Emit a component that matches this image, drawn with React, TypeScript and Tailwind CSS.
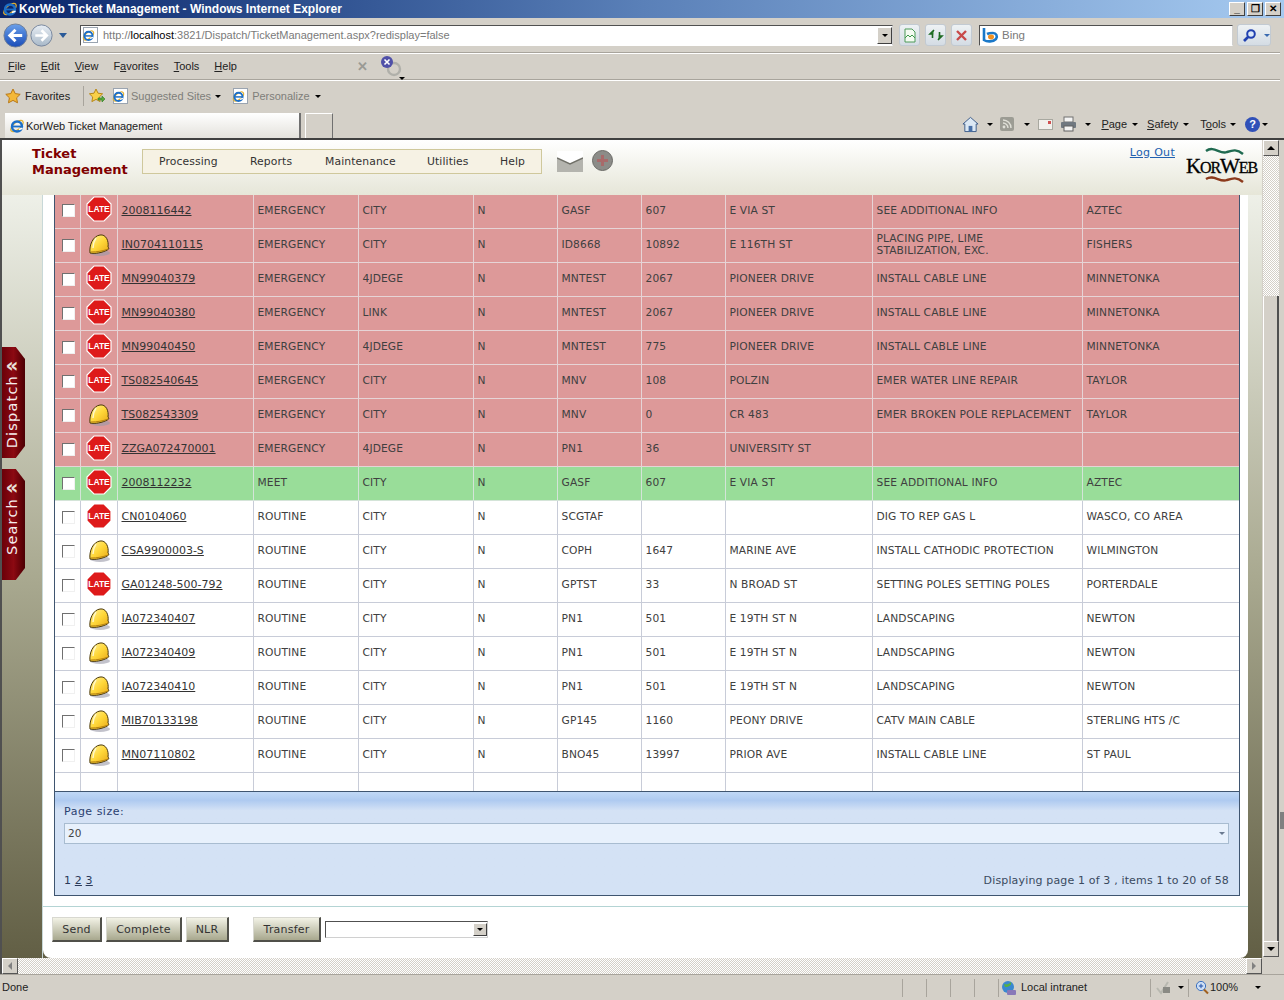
import React from "react"

type Row = {
  id: string
  icon: "late" | "hat"
  kind: string
  area: string
  code: string
  num: string
  street: string
  work: string[]
  city: string
  tone: "red" | "green" | "white"
}

const rows: Row[] = [
  { id: "2008116442", icon: "late", kind: "EMERGENCY", area: "CITY", code: "GASF", num: "607", street: "E VIA ST", work: ["SEE ADDITIONAL INFO"], city: "AZTEC", tone: "red" },
  { id: "IN0704110115", icon: "hat", kind: "EMERGENCY", area: "CITY", code: "ID8668", num: "10892", street: "E 116TH ST", work: ["PLACING PIPE, LIME", "STABILIZATION, EXC."], city: "FISHERS", tone: "red" },
  { id: "MN99040379", icon: "late", kind: "EMERGENCY", area: "4JDEGE", code: "MNTEST", num: "2067", street: "PIONEER DRIVE", work: ["INSTALL CABLE LINE"], city: "MINNETONKA", tone: "red" },
  { id: "MN99040380", icon: "late", kind: "EMERGENCY", area: "LINK", code: "MNTEST", num: "2067", street: "PIONEER DRIVE", work: ["INSTALL CABLE LINE"], city: "MINNETONKA", tone: "red" },
  { id: "MN99040450", icon: "late", kind: "EMERGENCY", area: "4JDEGE", code: "MNTEST", num: "775", street: "PIONEER DRIVE", work: ["INSTALL CABLE LINE"], city: "MINNETONKA", tone: "red" },
  { id: "TS082540645", icon: "late", kind: "EMERGENCY", area: "CITY", code: "MNV", num: "108", street: "POLZIN", work: ["EMER WATER LINE REPAIR"], city: "TAYLOR", tone: "red" },
  { id: "TS082543309", icon: "hat", kind: "EMERGENCY", area: "CITY", code: "MNV", num: "0", street: "CR 483", work: ["EMER BROKEN POLE REPLACEMENT"], city: "TAYLOR", tone: "red" },
  { id: "ZZGA072470001", icon: "late", kind: "EMERGENCY", area: "4JDEGE", code: "PN1", num: "36", street: "UNIVERSITY ST", work: [""], city: "", tone: "red" },
  { id: "2008112232", icon: "late", kind: "MEET", area: "CITY", code: "GASF", num: "607", street: "E VIA ST", work: ["SEE ADDITIONAL INFO"], city: "AZTEC", tone: "green" },
  { id: "CN0104060", icon: "late", kind: "ROUTINE", area: "CITY", code: "SCGTAF", num: "", street: "", work: ["DIG TO REP GAS L"], city: "WASCO, CO AREA", tone: "white" },
  { id: "CSA9900003-S", icon: "hat", kind: "ROUTINE", area: "CITY", code: "COPH", num: "1647", street: "MARINE AVE", work: ["INSTALL CATHODIC PROTECTION"], city: "WILMINGTON", tone: "white" },
  { id: "GA01248-500-792", icon: "late", kind: "ROUTINE", area: "CITY", code: "GPTST", num: "33", street: "N BROAD ST", work: ["SETTING POLES SETTING POLES"], city: "PORTERDALE", tone: "white" },
  { id: "IA072340407", icon: "hat", kind: "ROUTINE", area: "CITY", code: "PN1", num: "501", street: "E 19TH ST N", work: ["LANDSCAPING"], city: "NEWTON", tone: "white" },
  { id: "IA072340409", icon: "hat", kind: "ROUTINE", area: "CITY", code: "PN1", num: "501", street: "E 19TH ST N", work: ["LANDSCAPING"], city: "NEWTON", tone: "white" },
  { id: "IA072340410", icon: "hat", kind: "ROUTINE", area: "CITY", code: "PN1", num: "501", street: "E 19TH ST N", work: ["LANDSCAPING"], city: "NEWTON", tone: "white" },
  { id: "MIB70133198", icon: "hat", kind: "ROUTINE", area: "CITY", code: "GP145", num: "1160", street: "PEONY DRIVE", work: ["CATV MAIN CABLE"], city: "STERLING HTS /C", tone: "white" },
  { id: "MN07110802", icon: "hat", kind: "ROUTINE", area: "CITY", code: "BNO45", num: "13997", street: "PRIOR AVE", work: ["INSTALL CABLE LINE"], city: "ST PAUL", tone: "white" },
]

const IeLogo = ({ size = 16 }: { size?: number }) => (
  <svg width={size} height={size} viewBox="0 0 16 16" className="shrink-0">
    <ellipse cx="8" cy="8" rx="7.5" ry="3.6" transform="rotate(-40 8 8)" fill="none" stroke="#e0b030" strokeWidth="1.3" />
    <circle cx="8" cy="8.5" r="5" fill="none" stroke="#1c6fc8" strokeWidth="2.4" />
    <path d="M3.5 8.5h9" stroke="#1c6fc8" strokeWidth="1.8" />
    <path d="M10 11.5l3.5-1.2" stroke="#ffffff" strokeWidth="1.6" />
  </svg>
)

const PageIe = () => (
  <span className="relative block h-[16px] w-[15px] shrink-0 border border-[#9aa4b0] bg-white">
    <span className="absolute left-[-2px] top-[1px]">
      <IeLogo size={13} />
    </span>
  </span>
)

const Caret = ({ className = "" }: { className?: string }) => (
  <span className={`inline-block h-0 w-0 border-x-[3px] border-t-[3px] border-x-transparent border-t-black ${className}`} />
)

const NavButton = ({ size, from, to, dir }: { size: number; from: string; to: string; dir: string }) => (
  <svg width={size} height={size} viewBox="0 0 26 26" className="shrink-0">
    <defs>
      <linearGradient id={`nav${dir}`} x1="0" y1="0" x2="0" y2="1">
        <stop offset="0" stopColor={from} />
        <stop offset="1" stopColor={to} />
      </linearGradient>
    </defs>
    <circle cx="13" cy="13" r="12" fill={`url(#nav${dir})`} stroke="#6f7f98" />
    <path d={dir === "back" ? "M20 13H8m5-6l-6 6 6 6" : "M6 13h12m-5-6l6 6-6 6"} fill="none" stroke="#ffffff" strokeWidth="3" />
  </svg>
)

const ToolButton = ({ children }: { children: React.ReactNode }) => (
  <span className="flex h-[22px] w-[21px] items-center justify-center rounded-[3px] border border-[#c2cad2] bg-gradient-to-b from-[#eef2f4] to-[#d4dce4]">
    {children}
  </span>
)

const ArrowButton = ({ dir }: { dir: "up" | "down" | "left" | "right" }) => {
  const tri = {
    up: "border-x-[4px] border-b-[4px] border-x-transparent border-b-black",
    down: "border-x-[4px] border-t-[4px] border-x-transparent border-t-black",
    left: "border-y-[4px] border-r-[4px] border-y-transparent border-r-[#808080]",
    right: "border-y-[4px] border-l-[4px] border-y-transparent border-l-[#808080]",
  }[dir]
  return (
    <span className="flex h-[16px] w-[16px] shrink-0 items-center justify-center border border-t-white border-l-white border-r-[#555555] border-b-[#555555] bg-[#d4d0c8]">
      <span className={`h-0 w-0 ${tri}`} />
    </span>
  )
}

const LateIcon = () => (
  <svg width="26" height="26" viewBox="0 0 26 26" className="mx-auto mb-[3px] block">
    <polygon points="8,1 18,1 25,8 25,18 18,25 8,25 1,18 1,8" fill="#de1a1a" stroke="#ffffff" strokeWidth="1.2" />
    <text x="13" y="15.5" textAnchor="middle" fontSize="8.5" fontWeight="700" fill="#ffffff" fontFamily="Liberation Sans, sans-serif">LATE</text>
  </svg>
)

const HatIcon = () => (
  <svg width="24" height="24" viewBox="0 0 24 24" className="mx-auto mb-[1px] block">
    <defs>
      <linearGradient id="hat" x1="0" y1="0" x2="1" y2="1">
        <stop offset="0" stopColor="#fff2a0" />
        <stop offset="0.5" stopColor="#ffd83a" />
        <stop offset="1" stopColor="#e8a818" />
      </linearGradient>
    </defs>
    <ellipse cx="13" cy="20" rx="10" ry="3" fill="#9a9aa8" opacity="0.6" />
    <path d="M3 20C2 12 6 3 13 2c6-1 9 6 8 12 1 1 1 2 0 2.6C15 20 8 21 3 20Z" fill="url(#hat)" stroke="#4a3808" strokeWidth="1" />
    <path d="M9 5c-2 3-3 6-3 10" fill="none" stroke="#fff8c8" strokeWidth="1.4" />
    <path d="M4 19c6 0 12-1 17-3" fill="none" stroke="#b88410" strokeWidth="1" />
  </svg>
)

const SideTab = ({ label, bottom }: { label: string; bottom: string }) => (
  <div className={`flex h-[111px] w-[23px] flex-col items-center bg-gradient-to-r from-[#6a0008] via-[#8c0a12] to-[#4c0004] pr-[3px] pt-[8px] ${bottom} [clip-path:polygon(0_0,60%_0,100%_12px,100%_calc(100%-12px),60%_100%,0_100%)]`}>
    <span className="text-[20px] font-bold leading-[20px] text-[#e8e0d8]">«</span>
    <span className="mt-auto rotate-180 text-[14.5px] leading-[20px] tracking-[1.2px] text-[#f4eeee] [writing-mode:vertical-rl]">{label}</span>
  </div>
)

const FormButton = ({ label, width }: { label: string; width: string }) => (
  <button className={`h-[25px] ${width} border border-t-[#d8d8d0] border-l-[#d8d8d0] border-r-2 border-b-2 border-r-[#50504a] border-b-[#50504a] bg-gradient-to-b from-[#f2f2e6] to-[#a8a88e] pt-[3px] text-[11px] tracking-[0.2px] text-[#333333]`}>
    {label}
  </button>
)

const toneClass = { red: "bg-[#dd9999]", green: "bg-[#99dd99]", white: "bg-white" }
const lineClass = { red: "border-[#e6d4d6]", green: "border-[#d4e4d8]", white: "border-[#c8ccd8]" }
const cell = "border-r pl-[4px] pr-[3px] align-middle text-[10.67px] leading-[12px] tracking-[0.12px] text-[#404040]"

export default function App() {
  return (
    <div className="flex h-[1000px] w-[1284px] flex-col overflow-hidden bg-[#d4d0c8] font-['Liberation_Sans',sans-serif] text-[11px] text-[#222222]">
      {/* Title bar */}
      <div className="flex h-[18px] items-center bg-gradient-to-r from-[#0a246a] via-[#5a80b8] to-[#a6caf0] pl-[2px] pr-[3px]">
        <IeLogo size={16} />
        <span className="ml-[1px] text-[12px] font-bold leading-[18px] text-white">KorWeb Ticket Management - Windows Internet Explorer</span>
        <div className="ml-auto flex gap-[2px]">
          {["_", "❐", "✕"].map((g) => (
            <span key={g} className="flex h-[14px] w-[16px] items-center justify-center border border-t-white border-l-white border-r-[#404040] border-b-[#404040] bg-[#d4d0c8] text-[10px] font-bold leading-none text-black">
              {g}
            </span>
          ))}
        </div>
      </div>

      {/* Address row */}
      <div className="flex h-[34px] items-center pl-[3px]">
        <NavButton size={25} from="#6aa0ea" to="#1a4cb8" dir="back" />
        <span className="ml-[2px]"><NavButton size={23} from="#e8eef4" to="#a8b8c8" dir="fwd" /></span>
        <span className="ml-[6px] h-0 w-0 border-x-[4px] border-t-[5px] border-x-transparent border-t-[#2a5a98]" />
        <div className="ml-[13px] flex h-[21px] w-[813px] items-center border border-t-[#505050] border-l-[#505050] border-r-[#d0d0d0] border-b-white bg-white pl-[2px]">
          <PageIe />
          <span className="ml-[5px] pt-px text-[11px] text-[#7a7a7a]">http://<span className="text-black">localhost</span>:3821/Dispatch/TicketManagement.aspx?redisplay=false</span>
          <span className="ml-auto flex h-[17px] w-[15px] items-center justify-center border border-t-white border-l-white border-r-[#404040] border-b-[#404040] bg-[#d4d0c8]"><Caret /></span>
        </div>
        <div className="ml-[6px] flex gap-[5px]">
          <ToolButton>
            <svg width="14" height="15" viewBox="0 0 14 15"><path d="M2 1h7l3 3v10H2Z" fill="#f4fbf2" stroke="#4c9a58" /><path d="M2 10l3-3 2 2 2-2 3 3" fill="none" stroke="#3f9a4c" /></svg>
          </ToolButton>
          <ToolButton>
            <svg width="16" height="14" viewBox="0 0 16 14"><path d="M6 2L2 6h2.5v4M10 12l4-4h-2.5V4" fill="#2f8a30" stroke="#1d6a22" strokeWidth="1.6" /></svg>
          </ToolButton>
          <ToolButton>
            <svg width="13" height="13" viewBox="0 0 13 13"><path d="M2 2l9 9M11 2l-9 9" stroke="#c84a4a" strokeWidth="2.4" /></svg>
          </ToolButton>
        </div>
        <div className="ml-[7px] flex h-[21px] w-[254px] items-center border border-t-[#505050] border-l-[#505050] border-r-[#d0d0d0] border-b-white bg-white pl-[2px]">
          <svg width="17" height="16" viewBox="0 0 17 16"><path d="M2 1v12c3 2 9 2 12-1 2-3 0-6-3-6-2 0-4 0-6 1" fill="none" stroke="#1a78c8" strokeWidth="2.6" /><ellipse cx="9" cy="10" rx="3" ry="2.4" fill="#f09020" /></svg>
          <span className="ml-[3px] pt-px text-[11.5px] text-[#7a7a7a]">Bing</span>
        </div>
        <div className="ml-[4px] flex h-[22px] w-[34px] items-center rounded-[3px] border border-[#c2cad2] bg-gradient-to-b from-[#eef2f4] to-[#d4dce4] pl-[4px]">
          <svg width="15" height="15" viewBox="0 0 15 15"><circle cx="9" cy="6" r="3.8" fill="#dbe8fa" stroke="#2040b0" strokeWidth="2" /><path d="M6 9l-4 4" stroke="#2040b0" strokeWidth="2.6" /></svg>
          <span className="ml-[7px] h-0 w-0 border-x-[3px] border-t-[3px] border-x-transparent border-t-[#3a6ab0]" />
        </div>
      </div>
      <div className="mr-[4px] h-[2px] border-y border-t-[#a8a49c] border-b-white" />

      {/* Menu row */}
      <div className="flex h-[25px] items-center pl-[8px]">
        <nav className="flex gap-[15px] text-[11px] text-[#222222]">
          <span><u>F</u>ile</span>
          <span><u>E</u>dit</span>
          <span><u>V</u>iew</span>
          <span>F<u>a</u>vorites</span>
          <span><u>T</u>ools</span>
          <span><u>H</u>elp</span>
        </nav>
        <span className="ml-[120px] text-[13px] font-bold text-[#9a9a94]">✕</span>
        <span className="relative ml-[12px] block h-[24px] w-[24px]">
          <svg width="24" height="24" viewBox="0 0 24 24"><circle cx="14" cy="14" r="6" fill="none" stroke="#b0b0aa" strokeWidth="2.4" /><circle cx="7" cy="7" r="6" fill="#5050a8" /><path d="M4.5 4.5l5 5M9.5 4.5l-5 5" stroke="#ffffff" strokeWidth="1.6" /></svg>
          <Caret className="absolute bottom-[-1px] right-[-1px]" />
        </span>
      </div>
      <div className="mr-[4px] h-[2px] border-y border-t-[#a8a49c] border-b-white" />

      {/* Favorites row */}
      <div className="flex h-[30px] items-center pl-[5px] text-[11px]">
        <svg width="16" height="16" viewBox="0 0 16 16"><path d="M8 1l2.2 4.6 5 .7-3.6 3.5.9 5L8 12.4l-4.5 2.4.9-5L.8 6.3l5-.7Z" fill="#f4b838" stroke="#b87818" /></svg>
        <span className="ml-[4px] w-[58px] text-[#222222]">Favorites</span>
        <span className="h-[20px] border-l border-[#a8a49c]" />
        <span className="ml-[4px]">
          <svg width="18" height="16" viewBox="0 0 18 16"><path d="M8 1l2 4.2 4.6.6-3.3 3.2.8 4.6L8 11.4l-4.1 2.2.8-4.6L1.4 5.8 6 5.2Z" fill="#f8d048" stroke="#b88818" /><path d="M10 10h4V8l3 3-3 3v-2h-4Z" fill="#58a838" stroke="#2e7a20" strokeWidth="0.6" /></svg>
        </span>
        <span className="ml-[7px]"><PageIe /></span>
        <span className="ml-[3px] text-[#7e7e7a]">Suggested Sites</span>
        <Caret className="ml-[4px]" />
        <span className="ml-[12px]"><PageIe /></span>
        <span className="ml-[4px] text-[#7e7e7a]">Personalize</span>
        <Caret className="ml-[5px]" />
      </div>

      {/* Tab row */}
      <div className="flex h-[27px] items-end pl-[5px]">
        <div className="flex h-[25px] w-[296px] items-center border-r-2 border-[#707070] bg-gradient-to-b from-white to-[#e4e2dc] pl-[4px] text-[11px] tracking-[-0.1px] text-[#222222]">
          <IeLogo size={16} />
          <span className="ml-[1px] pt-px">KorWeb Ticket Management</span>
        </div>
        <div className="ml-[4px] h-[25px] w-[28px] border border-b-0 border-t-white border-l-white border-r-[#707070]" />
        <div className="mb-[5px] ml-auto flex items-center pr-[16px] text-[11px] text-[#222222]">
          <svg width="17" height="18" viewBox="0 0 18 18"><path d="M1 9l8-7 8 7h-2v8H3V9Z" fill="#dbe8f4" stroke="#3a5a88" /><rect x="7" y="11" width="4" height="6" fill="#4870a8" /></svg>
          <Caret className="ml-[8px]" />
          <span className="ml-[7px] flex h-[14px] w-[14px] items-center justify-center rounded-[2px] bg-[#9c9c94]">
            <svg width="10" height="10" viewBox="0 0 10 10"><circle cx="2" cy="8" r="1.4" fill="#e0e0d8" /><path d="M1 4a5 5 0 0 1 5 5M1 1a8 8 0 0 1 8 8" fill="none" stroke="#e0e0d8" strokeWidth="1.4" /></svg>
          </span>
          <Caret className="ml-[10px] border-t-[#9c9c94]" />
          <svg className="ml-[8px]" width="15" height="11" viewBox="0 0 15 11"><rect x="0.5" y="0.5" width="14" height="10" fill="#f2f0ec" stroke="#a8a8a0" /><rect x="10" y="2" width="3" height="3" fill="#d05050" /></svg>
          <svg className="ml-[7px]" width="17" height="16" viewBox="0 0 17 16"><rect x="4" y="1" width="9" height="5" fill="#f4f4f4" stroke="#707070" /><rect x="1" y="6" width="15" height="6" rx="1" fill="#707880" /><rect x="4" y="10" width="9" height="5" fill="#f4f4f4" stroke="#606060" /></svg>
          <Caret className="ml-[8px]" />
          <span className="ml-[10px]"><u>P</u>age</span>
          <Caret className="ml-[5px]" />
          <span className="ml-[9px]"><u>S</u>afety</span>
          <Caret className="ml-[5px]" />
          <span className="ml-[11px]">T<u>o</u>ols</span>
          <Caret className="ml-[4px]" />
          <span className="ml-[9px] flex h-[15px] w-[15px] items-center justify-center rounded-full bg-[#3050b8] text-[11px] font-bold leading-none text-white">?</span>
          <Caret className="ml-[2px]" />
        </div>
      </div>

      {/* Browser viewport */}
      <div className="flex h-[836px] shrink-0 border-t-2 border-[#404040]">
        <div className="flex w-[1262px] shrink-0 flex-col border-l-2 border-[#505050]">
          <div className="flex h-[834px] flex-col font-['DejaVu_Sans',sans-serif]">
            {/* Page header */}
            <header className="relative z-10 flex h-[55px] shrink-0 items-start bg-gradient-to-b from-white to-[#e6e6d8]">
              <h1 className="ml-[30px] mt-[6px] w-[110px] text-[13px] font-bold leading-[16px] text-[#800000]">Ticket Management</h1>
              <nav className="mt-[9px] flex h-[25px] w-[400px] items-center border border-[#cfc89c] bg-[#f6f2e4] pl-[16px] pt-[1px] text-[10.8px] tracking-[0.1px] text-[#333333]">
                <span className="w-[91px]">Processing</span>
                <span className="w-[75px]">Reports</span>
                <span className="w-[102px]">Maintenance</span>
                <span className="w-[73px]">Utilities</span>
                <span>Help</span>
              </nav>
              <svg className="ml-[15px] mt-[10px]" width="26" height="22" viewBox="0 0 26 22">
                <rect y="1" width="26" height="21" fill="#b4b4ae" />
                <path d="M0 1h26v7l-13 6L0 8Z" fill="#ffffff" />
                <path d="M0 8l13 6 13-6" fill="none" stroke="#707068" strokeWidth="1.4" />
              </svg>
              <svg className="ml-[9px] mt-[10px]" width="21" height="21" viewBox="0 0 21 21">
                <circle cx="10.5" cy="10.5" r="10" fill="#8c8c88" stroke="#6a6a66" />
                <path d="M10.5 5v11M5 10.5h11" stroke="#a86a6a" strokeWidth="3" />
              </svg>
              <a className="ml-auto mt-[5px] text-[11px] tracking-[0.3px] text-[#2060b0] underline">Log Out</a>
              <div className="relative ml-[11px] mr-[4px] mt-[6px] h-[42px] w-[72px]">
                <svg className="absolute left-[19px] top-0" width="40" height="42" viewBox="0 0 40 42">
                  <path d="M1 5c8-6 14 4 21 1 6-2 10-3 16 2" fill="none" stroke="#1f6a50" strokeWidth="2.4" />
                  <path d="M1 33c8-5 14 4 21 1 6-2 10-3 16 2" fill="none" stroke="#8c3a1c" strokeWidth="2.4" />
                </svg>
                <span className="absolute left-0 top-[8px] font-['Liberation_Serif',serif] text-[21px] leading-[24px] tracking-[-1.1px] text-black [-webkit-text-stroke:0.3px_black]">K<span className="text-[16px]">OR</span>W<span className="text-[16px]">EB</span></span>
              </div>
            </header>

            {/* Page body */}
            <div className="flex min-h-0 flex-1 bg-gradient-to-b from-[#eef0e8] via-[#a9a990] to-[#625f45]">
              <aside className="flex w-[41px] shrink-0 flex-col gap-[11px] border-r border-[#c8d8d8] pt-[152px]">
                <SideTab label="Dispatch" bottom="pb-[10px]" />
                <SideTab label="Search" bottom="pb-[25px]" />
              </aside>

              <main className="flex w-[1205px] shrink-0 flex-col overflow-hidden rounded-b-[8px] bg-white">
                <div className="h-[712px] shrink-0 border-b border-[#b4d4d4] pl-[11px]">
                  <div className="-mt-px w-[1186px] border-x border-b border-[#3f5570]">
                    <table className="w-[1184px] table-fixed border-collapse">
                      <colgroup>
                        <col className="w-[25px]" />
                        <col className="w-[37px]" />
                        <col className="w-[136px]" />
                        <col className="w-[105px]" />
                        <col className="w-[115px]" />
                        <col className="w-[84px]" />
                        <col className="w-[84px]" />
                        <col className="w-[84px]" />
                        <col className="w-[147px]" />
                        <col className="w-[210px]" />
                        <col className="w-[157px]" />
                      </colgroup>
                      <tbody>
                        {rows.map((r) => (
                          <tr key={r.id} className={`h-[34px] border-b ${toneClass[r.tone]} ${lineClass[r.tone]}`}>
                            <td className={`border-r pl-[2px] text-center ${lineClass[r.tone]}`}>
                              <span className={`mx-auto block h-[13px] w-[13px] border border-t-[#707070] border-l-[#707070] border-r-[#f0f0f0] border-b-[#f0f0f0] bg-white ${r.tone === "white" ? "border-r-[#c8c8c8] border-b-[#c8c8c8]" : ""}`} />
                            </td>
                            <td className={`border-r ${lineClass[r.tone]}`}>{r.icon === "late" ? <LateIcon /> : <HatIcon />}</td>
                            <td className={`border-r pl-[4px] pr-[3px] text-[11px] text-[#333333] underline ${lineClass[r.tone]}`}>{r.id}</td>
                            <td className={`${cell} ${lineClass[r.tone]}`}>{r.kind}</td>
                            <td className={`${cell} ${lineClass[r.tone]}`}>{r.area}</td>
                            <td className={`${cell} ${lineClass[r.tone]}`}>N</td>
                            <td className={`${cell} ${lineClass[r.tone]}`}>{r.code}</td>
                            <td className={`${cell} ${lineClass[r.tone]}`}>{r.num}</td>
                            <td className={`${cell} ${lineClass[r.tone]}`}>{r.street}</td>
                            <td className={`${cell} ${lineClass[r.tone]}`}>
                              {r.work.map((w) => (
                                <div key={w}>{w}</div>
                              ))}
                            </td>
                            <td className={`${cell} border-r-0`}>{r.city}</td>
                          </tr>
                        ))}
                        <tr className="h-[19px] bg-white">
                          {[0, 1, 2, 3, 4, 5, 6, 7, 8, 9].map((i) => (
                            <td key={i} className="border-r border-[#c8ccd8]" />
                          ))}
                          <td />
                        </tr>
                      </tbody>
                    </table>

                    {/* Pager */}
                    <div className="h-[104px] border-t border-[#3f5570] bg-gradient-to-b from-[#c0d8f6] from-0% via-[#aecaf0] via-[8%] to-[#d4e2f5] to-[18%] pl-[9px] pr-[10px] pt-[13px] text-[11px] tracking-[0.15px] text-[#3a4a60]">
                      <div className="leading-[13px] tracking-[0.5px] text-[#2a4070]">Page size:</div>
                      <div className="mt-[5px] flex h-[21px] items-center justify-between border border-[#a8bcd0] bg-[#e8f1fc] pl-[3px] pr-[3px]">
                        <span className="text-[10.5px] text-[#444444]">20</span>
                        <span className="h-0 w-0 border-x-[3px] border-t-[3px] border-x-transparent border-t-[#6a7a90]" />
                      </div>
                      <div className="mt-[30px] flex items-center justify-between leading-[13px]">
                        <span className="text-[#2a3a5a]">1 <u>2</u> <u>3</u></span>
                        <span>Displaying page 1 of 3 , items 1 to 20 of 58</span>
                      </div>
                    </div>
                  </div>
                </div>

                {/* Actions */}
                <div className="flex items-start gap-[4px] pl-[9px] pt-[10px]">
                  <FormButton label="Send" width="w-[50px]" />
                  <FormButton label="Complete" width="w-[76px]" />
                  <FormButton label="NLR" width="w-[43px]" />
                  <span className="ml-[20px]"><FormButton label="Transfer" width="w-[68px]" /></span>
                  <div className="mt-[4px] flex h-[17px] w-[163px] items-center justify-end border border-t-[#505050] border-l-[#505050] border-r-[#d0d0d0] border-b-[#d0d0d0] bg-white">
                    <span className="flex h-[13px] w-[14px] items-center justify-center border border-t-white border-l-white border-r-[#404040] border-b-[#404040] bg-[#d4d0c8]"><Caret /></span>
                  </div>
                </div>
              </main>
              <div className="flex-1" />
            </div>

            {/* Horizontal scrollbar */}
            <div className="flex h-[16px] shrink-0 bg-[repeating-conic-gradient(#d4d0c8_0_25%,#ffffff_0_50%)] bg-[length:2px_2px]">
              <ArrowButton dir="left" />
              <span className="flex-1" />
              <ArrowButton dir="right" />
            </div>
          </div>
        </div>

        {/* Vertical scrollbar */}
        <div className="flex w-[17px] shrink-0 flex-col pl-px">
          <ArrowButton dir="up" />
          <div className="h-[140px] w-[16px] bg-[repeating-conic-gradient(#d4d0c8_0_25%,#ffffff_0_50%)] bg-[length:2px_2px]" />
          <div className="h-[645px] w-[16px] border-l border-r-2 border-l-white border-r-[#505050] bg-[#d4d0c8]" />
          <ArrowButton dir="down" />
        </div>
        <div className="ml-px w-[4px] pt-[672px]">
          <div className="h-[17px] bg-[#808080]" />
        </div>
      </div>

      {/* Status bar */}
      <div className="flex h-[26px] items-center border-t border-t-[#a8a49c] bg-[#d4d0c8] text-[11px] text-[#222222]">
        <span className="w-[902px] pl-[2px]">Done</span>
        {[0, 1, 2, 3].map((i) => (
          <span key={i} className="h-[18px] w-[24px] border-l border-[#a8a49c]" />
        ))}
        <span className="flex h-[18px] w-[152px] items-center gap-[3px] border-l border-[#a8a49c] pl-[2px]">
          <svg width="17" height="16" viewBox="0 0 17 16"><circle cx="7" cy="7" r="6" fill="#3a88d0" /><path d="M3 4c3 1 5 0 7-2 1 3-2 5-6 5" fill="#58b040" /><rect x="6" y="10" width="9" height="5" rx="1" fill="#8878b8" /></svg>
          Local intranet
        </span>
        <span className="flex h-[18px] w-[38px] items-center gap-[6px] border-l border-[#a8a49c] pl-[5px]">
          <svg width="16" height="15" viewBox="0 0 16 15"><path d="M1 8l4 5 7-11" fill="none" stroke="#b8b8b0" strokeWidth="2" /><rect x="7" y="7" width="7" height="6" fill="#8a8a84" /></svg>
          <Caret />
        </span>
        <span className="flex h-[18px] flex-1 items-center border-l border-[#a8a49c] pl-[6px]">
          <svg width="14" height="15" viewBox="0 0 14 15"><circle cx="6" cy="6" r="4.6" fill="#cfe0f6" stroke="#3a70c0" /><path d="M3.8 6h4.4M6 3.8v4.4" stroke="#2050a8" /><path d="M9 9.5l4 4" stroke="#a06020" strokeWidth="2" /></svg>
          <span className="ml-px">100%</span>
          <Caret className="ml-[17px]" />
        </span>
      </div>
    </div>
  )
}
